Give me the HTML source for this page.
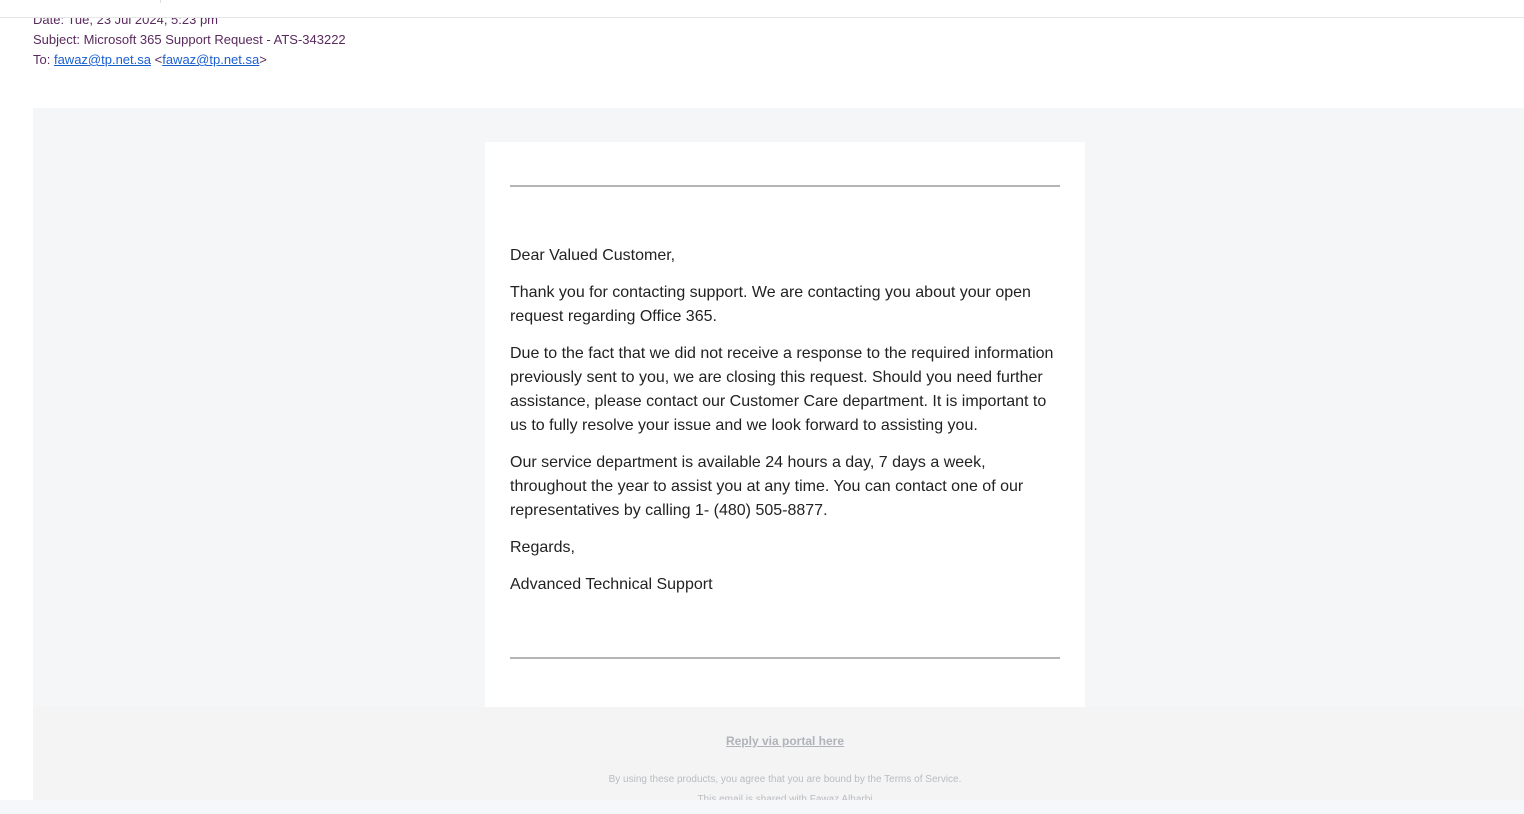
<!DOCTYPE html>
<html><head><style>
body{margin:0;width:1524px;height:814px;overflow:hidden;background:#fff;font-family:"Liberation Sans",Arial,sans-serif;position:relative}
.top{position:absolute;left:0;top:0;width:1524px;height:17px;border-bottom:1px solid #e6e6e6;background:#fff;z-index:2}
.hdr{position:absolute;left:33px;top:10px;font-size:13px;line-height:20px;color:#5a2a5e}
.hdr a{color:#1a5fd0}
.gray{position:absolute;left:33px;top:108px;width:1491px;height:599px;background:#f5f6f8}
.card{position:absolute;left:485px;top:142px;width:600px;height:565px;background:#fff}
.hr{position:absolute;left:25px;width:550px;height:2px;background:#b5b5b5}
.txt{position:absolute;left:25px;top:102px;width:550px;font-size:16px;line-height:24px;color:#222}
.txt p{margin:0 0 13px}
.foot{position:absolute;left:0;top:707px;width:1570px;height:93px;text-align:center;color:#b9bcc1}
.footbg{position:absolute;left:33px;top:707px;width:1491px;height:93px;background:#f4f4f4}
.bot{position:absolute;left:0;top:800px;width:1524px;height:14px;background:#f6f7fa}
</style></head><body>
<div class="top"><div style="position:absolute;left:160px;top:0;width:1px;height:3px;background:#ddd"></div></div>
<div class="hdr">Date: Tue, 23 Jul 2024, 5:23 pm<br>Subject: Microsoft 365 Support Request - ATS-343222<br>To: <a href="#">fawaz@tp.net.sa</a> &lt;<a href="#">fawaz@tp.net.sa</a>&gt;</div>
<div class="gray"></div>
<div class="card">
<div class="hr" style="top:43px"></div>
<div class="txt">
<p>Dear Valued Customer,</p>
<p>Thank you for contacting support. We are contacting you about your open request regarding Office 365.</p>
<p>Due to the fact that we did not receive a response to the required information previously sent to you, we are closing this request. Should you need further assistance, please contact our Customer Care department. It is important to us to fully resolve your issue and we look forward to assisting you.</p>
<p>Our service department is available 24 hours a day, 7 days a week, throughout the year to assist you at any time. You can contact one of our representatives by calling 1- (480) 505-8877.</p>
<p>Regards,</p>
<p>Advanced Technical Support</p>
</div>
<div class="hr" style="top:515px"></div>
</div>
<div class="footbg"></div>
<div class="foot">
<div style="position:absolute;left:0;right:0;top:27px;font-size:12px;font-weight:bold;text-decoration:underline;color:#b0b4ba">Reply via portal here</div>
<div style="position:absolute;left:0;right:0;top:67px;font-size:10px">By using these products, you agree that you are bound by the Terms of Service.</div>
<div style="position:absolute;left:0;right:0;top:87px;font-size:10px">This email is shared with Fawaz Alharbi</div>
</div>
<div class="bot"></div>
</body></html>
